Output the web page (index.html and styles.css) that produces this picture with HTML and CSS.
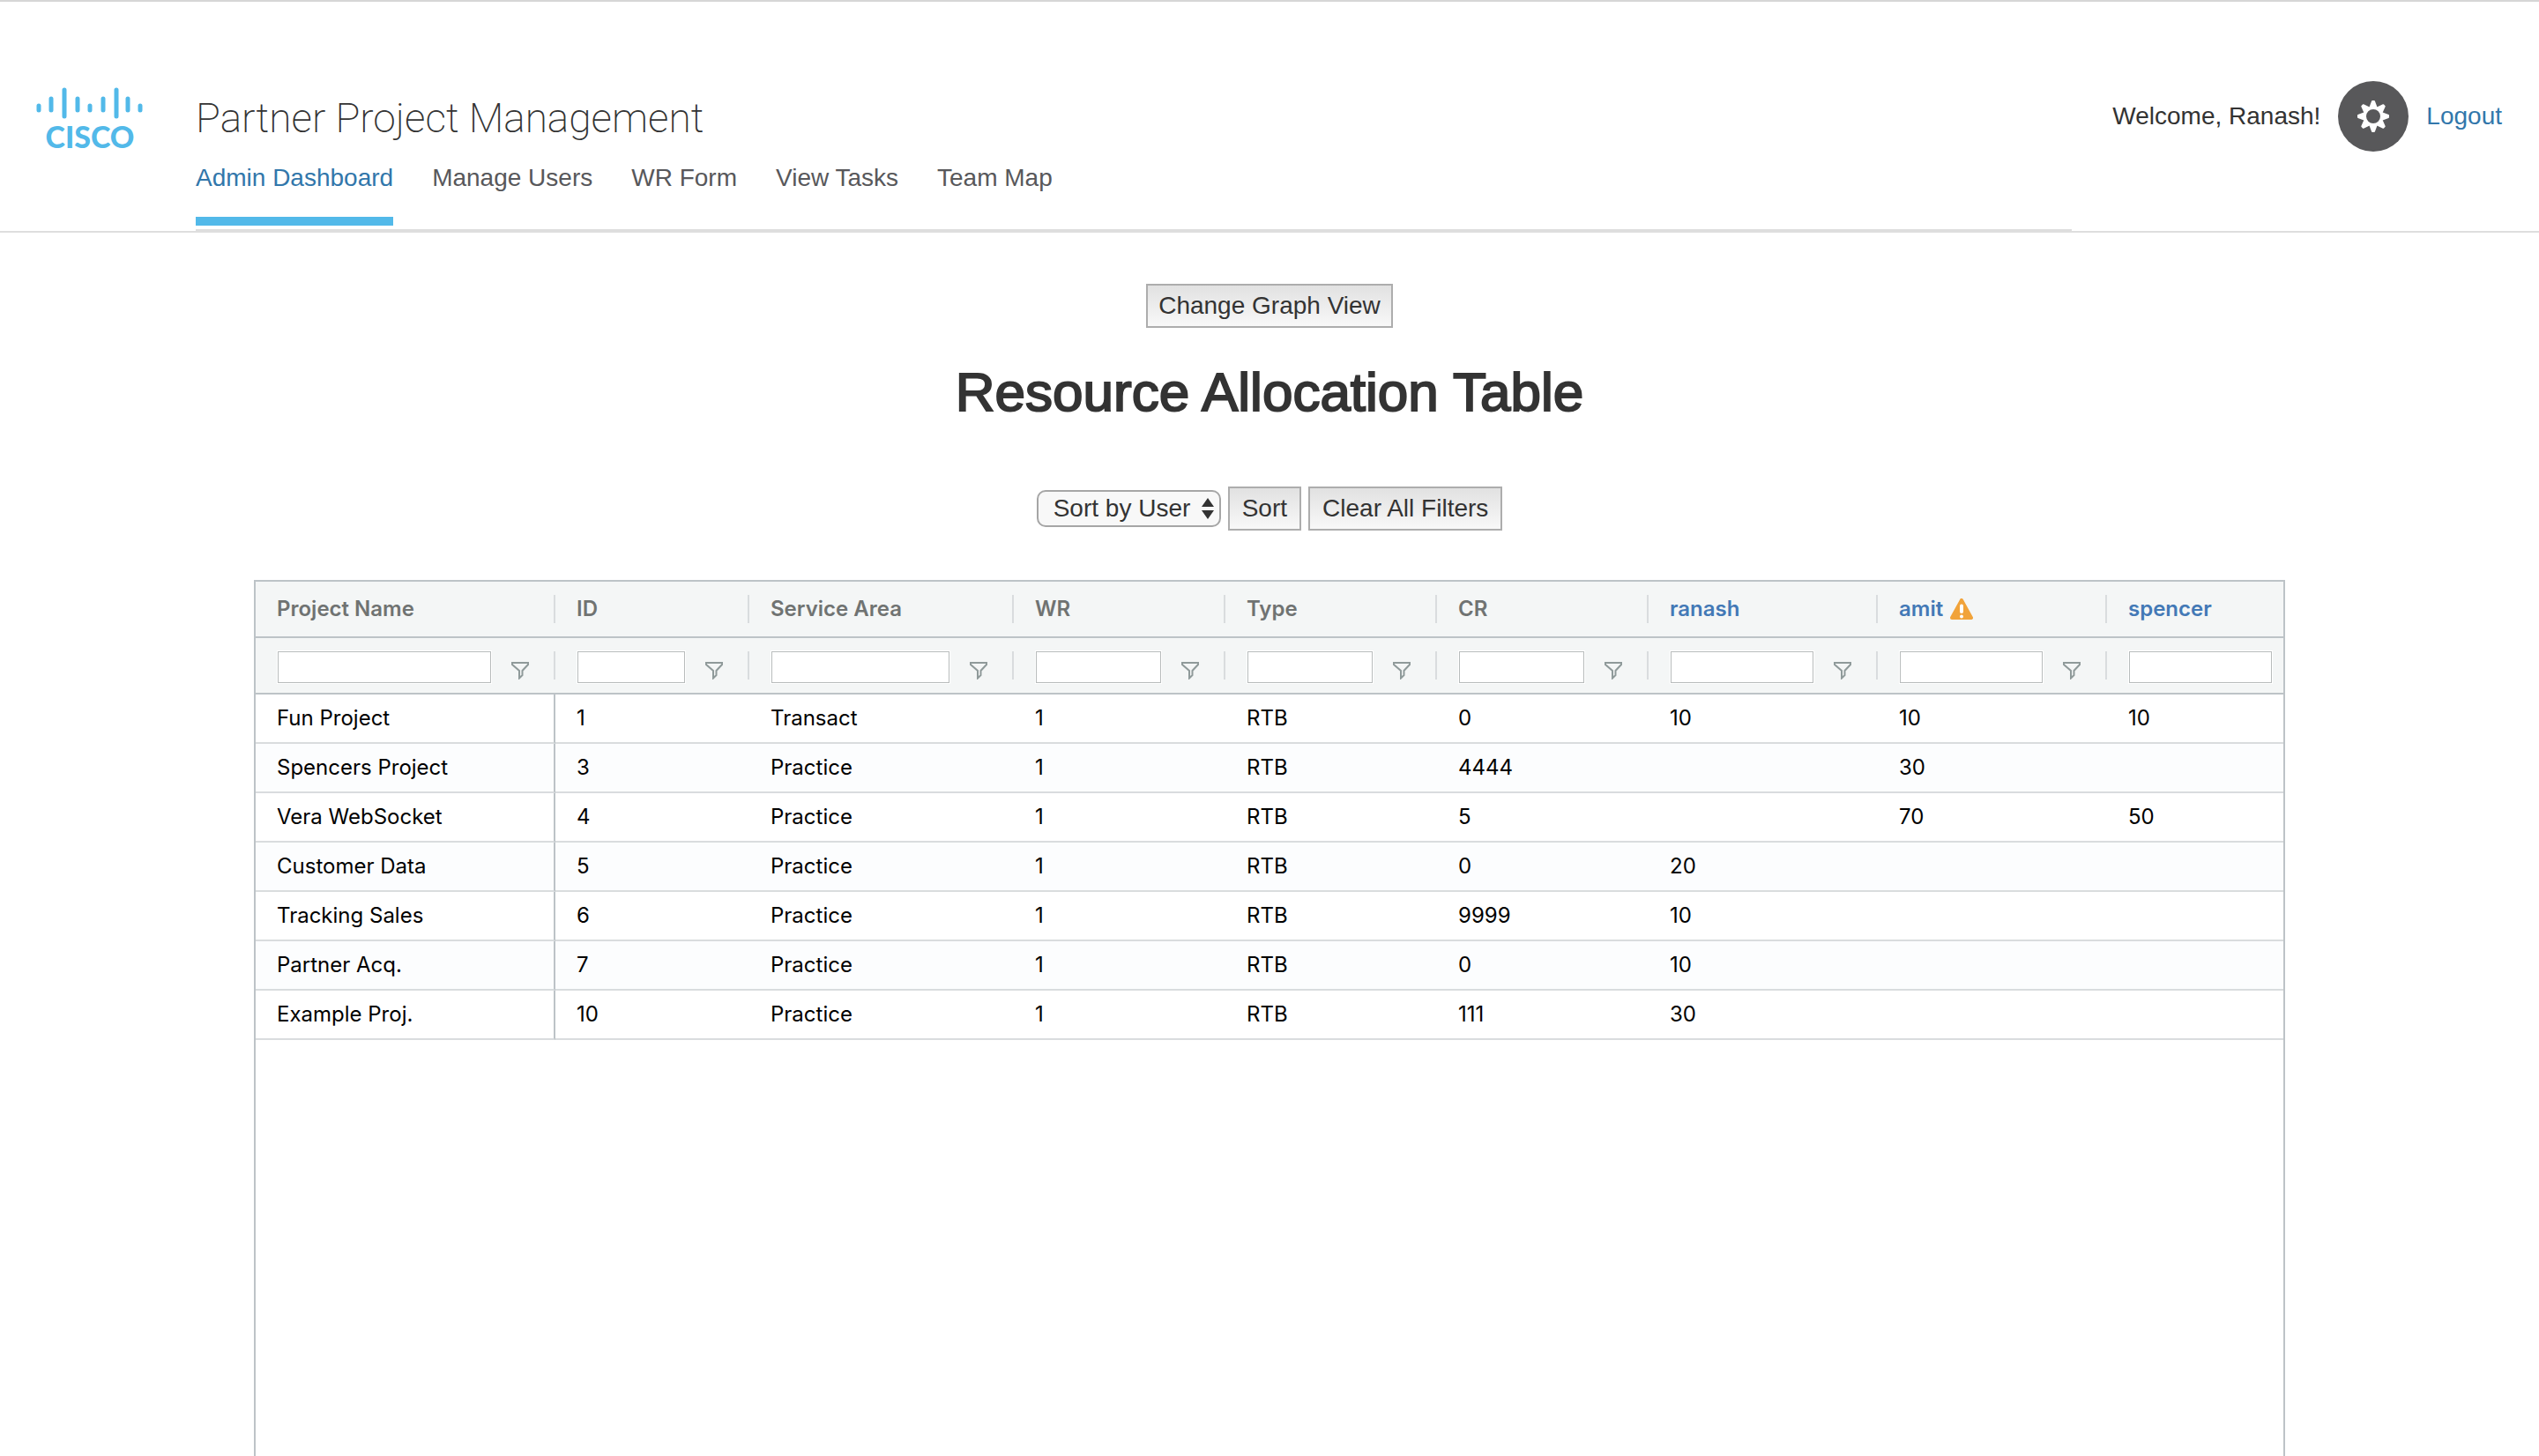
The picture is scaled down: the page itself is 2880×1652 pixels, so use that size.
FILE: index.html
```html
<!DOCTYPE html>
<html lang="en">
<head>
<meta charset="utf-8">
<title>Partner Project Management</title>
<link rel="stylesheet" href="styles.css">
</head>
<body>
<svg class="sprite" aria-hidden="true">
  <symbol id="funnel" viewBox="0 0 20 20"><path d="M1 1H19V3L12.500 10V15L9 18.500V10L1 3Z" fill="none" stroke="#8f9a9a" stroke-width="2"/></symbol>
</svg>

<header class="header">
  <a class="logo" href="#" aria-label="Cisco home">
    <svg width="124" height="90" viewBox="0 0 124 90">
      <g stroke="#52b9e9" stroke-width="5" stroke-linecap="round">
        <path d="M4 22V27M18 14V27M33 4V34M48 14V27M62 22V27M77 14V27M92 4V34M105 14V27M119 22V27"/>
      </g>
      <text x="62" y="70" text-anchor="middle" class="logo-text">CISCO</text>
    </svg>
  </a>
  <div class="header-main">
    <div class="title">Partner Project Management</div>
    <nav class="nav">
      <a class="active" href="#">Admin Dashboard</a>
      <a href="#">Manage Users</a>
      <a href="#">WR Form</a>
      <a href="#">View Tasks</a>
      <a href="#">Team Map</a>
    </nav>
  </div>
  <div class="account">
    <span>Welcome, Ranash!</span>
    <button class="gear" type="button" aria-label="Settings">
      <svg width="40" height="40" viewBox="-20 -20 40 40">
        <g stroke="#fff" stroke-linejoin="round" stroke-width="2" fill="#fff">
          <path id="tooth" d="M-4 -9L-1 -17H1L4 -9Z"/>
          <use href="#tooth" transform="rotate(45)"/>
          <use href="#tooth" transform="rotate(90)"/>
          <use href="#tooth" transform="rotate(135)"/>
          <use href="#tooth" transform="rotate(180)"/>
          <use href="#tooth" transform="rotate(225)"/>
          <use href="#tooth" transform="rotate(270)"/>
          <use href="#tooth" transform="rotate(315)"/>
        </g>
        <circle r="9.500" fill="#58585a" stroke="#fff" stroke-width="3"/>
      </svg>
    </button>
    <a href="#">Logout</a>
  </div>
</header>

<main class="content">
  <button class="btn" type="button">Change Graph View</button>
  <h1>Resource Allocation Table</h1>
  <form class="toolbar">
    <div class="select-wrap">
      <select aria-label="Sort by"><option>Sort by User</option></select>
      <svg class="arrows" width="14" height="24" viewBox="0 0 14 24"><path d="M0 10L7 0L14 10ZM0 14H14L7 24Z" fill="#333"/></svg>
    </div>
    <button class="btn wide" type="button">Sort</button>
    <button class="btn wide" type="button">Clear All Filters</button>
  </form>

  <div class="grid">
    <table>
      <colgroup>
        <col class="c-name"><col class="c-id"><col class="c-area"><col class="c-code"><col class="c-code"><col class="c-code"><col class="c-user"><col class="c-user"><col class="c-user">
      </colgroup>
      <thead>
        <tr>
          <th scope="col"><div class="head">Project Name</div></th>
          <th scope="col"><div class="head">ID</div></th>
          <th scope="col"><div class="head">Service Area</div></th>
          <th scope="col"><div class="head">WR</div></th>
          <th scope="col"><div class="head">Type</div></th>
          <th scope="col"><div class="head">CR</div></th>
          <th scope="col"><div class="head"><a href="#">ranash</a></div></th>
          <th scope="col"><div class="head"><a href="#">amit</a><svg width="26" height="24" viewBox="0 0 26 24" role="img" aria-label="Over-allocated"><path d="M13 2L24 22H2Z" fill="#f1a33a" stroke="#f1a33a" stroke-width="4" stroke-linejoin="round"/><path d="M13 8.500V15" stroke="#fff" stroke-width="4" stroke-linecap="round"/><circle cx="13" cy="20.500" r="2" fill="#fff"/></svg></div></th>
          <th scope="col"><div class="head"><a href="#">spencer</a></div></th>
        </tr>
        <tr>
          <td><div class="filter"><input type="text" aria-label="Filter Project Name"><button type="button" aria-label="Project Name filter options"><svg><use href="#funnel"/></svg></button></div></td>
          <td><div class="filter"><input type="text" aria-label="Filter ID"><button type="button" aria-label="ID filter options"><svg><use href="#funnel"/></svg></button></div></td>
          <td><div class="filter"><input type="text" aria-label="Filter Service Area"><button type="button" aria-label="Service Area filter options"><svg><use href="#funnel"/></svg></button></div></td>
          <td><div class="filter"><input type="text" aria-label="Filter WR"><button type="button" aria-label="WR filter options"><svg><use href="#funnel"/></svg></button></div></td>
          <td><div class="filter"><input type="text" aria-label="Filter Type"><button type="button" aria-label="Type filter options"><svg><use href="#funnel"/></svg></button></div></td>
          <td><div class="filter"><input type="text" aria-label="Filter CR"><button type="button" aria-label="CR filter options"><svg><use href="#funnel"/></svg></button></div></td>
          <td><div class="filter"><input type="text" aria-label="Filter ranash"><button type="button" aria-label="ranash filter options"><svg><use href="#funnel"/></svg></button></div></td>
          <td><div class="filter"><input type="text" aria-label="Filter amit"><button type="button" aria-label="amit filter options"><svg><use href="#funnel"/></svg></button></div></td>
          <td><div class="filter"><input type="text" aria-label="Filter spencer"></div></td>
        </tr>
      </thead>
      <tbody>
        <tr><td>Fun Project</td><td>1</td><td>Transact</td><td>1</td><td>RTB</td><td>0</td><td>10</td><td>10</td><td>10</td></tr>
        <tr><td>Spencers Project</td><td>3</td><td>Practice</td><td>1</td><td>RTB</td><td>4444</td><td></td><td>30</td><td></td></tr>
        <tr><td>Vera WebSocket</td><td>4</td><td>Practice</td><td>1</td><td>RTB</td><td>5</td><td></td><td>70</td><td>50</td></tr>
        <tr><td>Customer Data</td><td>5</td><td>Practice</td><td>1</td><td>RTB</td><td>0</td><td>20</td><td></td><td></td></tr>
        <tr><td>Tracking Sales</td><td>6</td><td>Practice</td><td>1</td><td>RTB</td><td>9999</td><td>10</td><td></td><td></td></tr>
        <tr><td>Partner Acq.</td><td>7</td><td>Practice</td><td>1</td><td>RTB</td><td>0</td><td>10</td><td></td><td></td></tr>
        <tr><td>Example Proj.</td><td>10</td><td>Practice</td><td>1</td><td>RTB</td><td>111</td><td>30</td><td></td><td></td></tr>
      </tbody>
    </table>
  </div>
</main>
</body>
</html>
```

FILE: styles.css
```css
* { box-sizing: border-box; }

body {
  margin: 0;
  min-height: 100vh;
  display: flex;
  flex-direction: column;
  background: #fff;
  color: #333;
  font: 28px/32px "Liberation Sans", Arial, sans-serif;
}

a { color: #3277ab; text-decoration: none; }
button, select, input { font: inherit; color: inherit; }
.sprite { position: absolute; width: 0; height: 0; }

/* Header */
.header {
  display: flex;
  align-items: flex-start;
  border-top: 2px solid #d6d6d6;
  border-bottom: 2px solid #dedede;
}
.logo { flex: none; width: 222px; padding: 96px 0 0 40px; }
.logo svg { display: block; overflow: visible; }
.logo-text { font: 900 34px Lato, sans-serif; fill: #52b9e9; }

.header-main { flex: 1; padding-top: 102px; margin-bottom: -2px; }
.title {
  font: 200 46px/60px Roboto, sans-serif;
  margin-bottom: 22px;
}
.nav {
  display: flex;
  gap: 44px;
  padding-bottom: 4px;
  border-bottom: 4px solid #dedede;
}
.nav a {
  color: #58585b;
  padding-bottom: 28px;
  border-bottom: 10px solid transparent;
}
.nav .active { color: #3277ab; border-bottom-color: #52b9e9; }

.account {
  flex: none;
  width: 530px;
  padding: 90px 42px 0 0;
  display: flex;
  justify-content: flex-end;
  align-items: center;
  gap: 20px;
}
.gear {
  width: 80px;
  height: 80px;
  padding: 0;
  border: 0;
  border-radius: 50%;
  background: #58585a;
  display: flex;
  align-items: center;
  justify-content: center;
}

/* Content */
.content {
  flex: 1;
  display: flex;
  flex-direction: column;
  align-items: center;
  padding: 58px 10% 0;
}
.btn {
  height: 50px;
  padding: 0 12px;
  border: 2px solid #adadad;
  border-radius: 0;
  background: linear-gradient(#e1e1e1, #f8f8f8);
}
.btn.wide { padding: 0 14px; }
h1 {
  margin: 40px 0 74px;
  font-weight: 400;
  font-size: 62px;
  line-height: 66px;
  -webkit-text-stroke: 2px #333;
}
.toolbar { display: flex; align-items: center; gap: 8px; margin-bottom: 56px; }
.select-wrap { position: relative; }
.select-wrap select {
  display: block;
  appearance: none;
  height: 42px;
  padding: 0 32px 0 17px;
  border: 2px solid #a6a6a6;
  border-radius: 10px;
  background: #f8f8f8;
}
.arrows { position: absolute; right: 8px; top: 9px; pointer-events: none; }

/* Grid */
.grid {
  flex: 1;
  width: 100%;
  overflow: hidden;
  border: 2px solid #bdc3c7;
  border-bottom: 0;
  font: 24px/32px Inter, "Noto Sans", sans-serif;
  color: #000;
}
table { table-layout: fixed; width: 2360px; border-collapse: separate; border-spacing: 0; }
.c-name { width: 340px; }
.c-id { width: 220px; }
.c-area { width: 300px; }
.c-code { width: 240px; }
.c-user { width: 260px; }

thead th, thead td {
  height: 64px;
  padding: 0;
  background: #f4f6f6;
  border-bottom: 2px solid #bdc3c7;
  text-align: left;
}
.head, .filter {
  display: flex;
  align-items: center;
  height: 32px;
  padding-left: 24px;
  border-right: 2px solid #d9dcde;
}
.head { gap: 8px; font-weight: 600; color: #707372; }
.head a { color: #4379b6; }
.filter { padding-left: 25px; }
.filter input {
  flex: none;
  width: calc(100% - 71px);
  height: 36px;
  margin: 4px 0 0;
  padding: 0 4px;
  border: 1px solid #b8bcbc;
  border-radius: 0;
  background: #fff;
  outline: 1px solid #fff;
}
.filter button {
  width: 20px;
  height: 20px;
  margin: 12px 0 0 23px;
  padding: 0;
  border: 0;
  background: none;
}
.filter svg { display: block; width: 20px; height: 20px; }

tbody td {
  height: 56px;
  padding: 0 24px;
  border-bottom: 2px solid #d9dcde;
  white-space: nowrap;
}
tbody td:first-child { border-right: 2px solid #bdc3c7; }
tbody tr:nth-child(even) { background: #fcfdfe; }
```
